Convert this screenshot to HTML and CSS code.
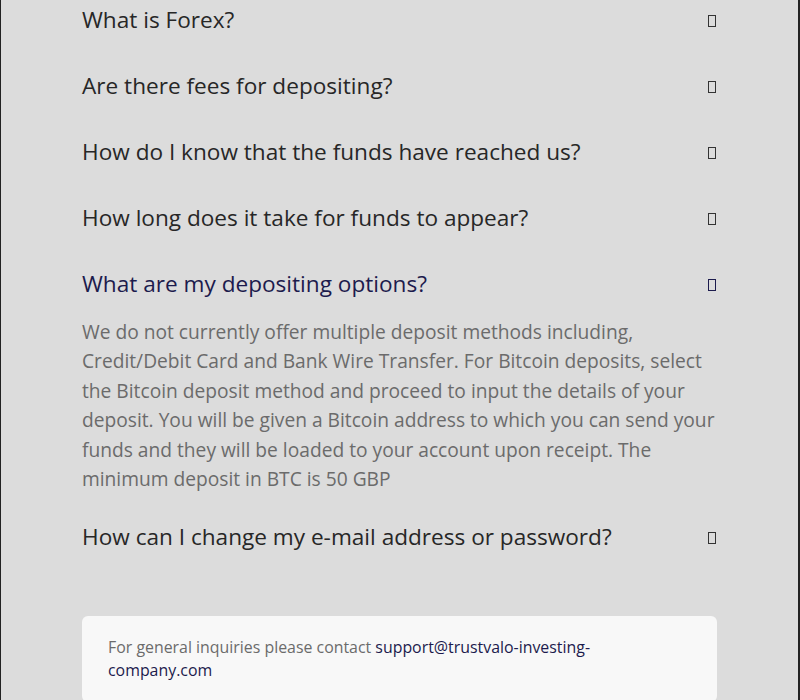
FILE: index.html
```html
<!DOCTYPE html>
<html lang="en">
<head>
    <meta charset="UTF-8">
    <meta name="viewport" content="width=device-width, initial-scale=1.0">
    <title>FAQ</title>
    <link rel="stylesheet" href="styles.css">
</head>
<body>
<div class="page">
    <div class="faq">
        <div class="faq-item">
            <div class="question"><span>What is Forex?</span><i class="toggle"></i></div>
        </div>
        <div class="faq-item">
            <div class="question"><span>Are there fees for depositing?</span><i class="toggle"></i></div>
        </div>
        <div class="faq-item">
            <div class="question"><span>How do I know that the funds have reached us?</span><i class="toggle"></i></div>
        </div>
        <div class="faq-item">
            <div class="question"><span>How long does it take for funds to appear?</span><i class="toggle"></i></div>
        </div>
        <div class="faq-item open">
            <div class="question"><span>What are my depositing options?</span><i class="toggle"></i></div>
            <p class="answer">We do not currently offer multiple deposit methods including, Credit/Debit Card and Bank Wire Transfer. For Bitcoin deposits, select the Bitcoin deposit method and proceed to input the details of your deposit. You will be given a Bitcoin address to which you can send your funds and they will be loaded to your account upon receipt. The minimum deposit in BTC is 50 GBP</p>
        </div>
        <div class="faq-item">
            <div class="question"><span>How can I change my e-mail address or password?</span><i class="toggle"></i></div>
        </div>
    </div>

    <div class="contact">
        For general inquiries please contact <a href="#">support@trustvalo-investing-company.com</a>
    </div>
</div>
</body>
</html>
```

FILE: styles.css
```css
html, body {
    height: 100%;
}

body {
    font-family: "Open Sans", "Noto Sans", sans-serif;
    margin: 0;
    background-color: #dcdcdc;
    border-left: 1px solid #222;
    border-right: 2px solid #222;
    box-sizing: border-box;
    overflow: hidden;
}

.page {
    width: 635px;
    margin: 0 auto;
}

.faq {
    margin-top: -13px; /* page is scrolled a bit */
}

.question {
    display: flex;
    justify-content: space-between;
    align-items: center;
    padding: 15px 0;
    font-size: 22.6px;
    line-height: 36px;
    color: #272727;
}

.open .question {
    color: #1c1b4d;
}

.toggle {
    width: 6px;
    height: 10px;
    border: 1px solid #333;
    margin-right: 1px;
    margin-top: 2px;
}

.open .toggle {
    border-color: #1c1b4d;
}

.answer {
    margin: 0 0 11px;
    font-size: 19.2px;
    line-height: 29.4px;
    color: #6b6b6b;
}

.contact {
    margin-top: 46px;
    background-color: #f8f8f8;
    border-radius: 6px;
    padding: 20px 26px;
    font-size: 15.9px;
    line-height: 23px;
    color: #6b6b6b;
}

.contact a {
    color: #1c1b4d;
    text-decoration: none;
}
```
